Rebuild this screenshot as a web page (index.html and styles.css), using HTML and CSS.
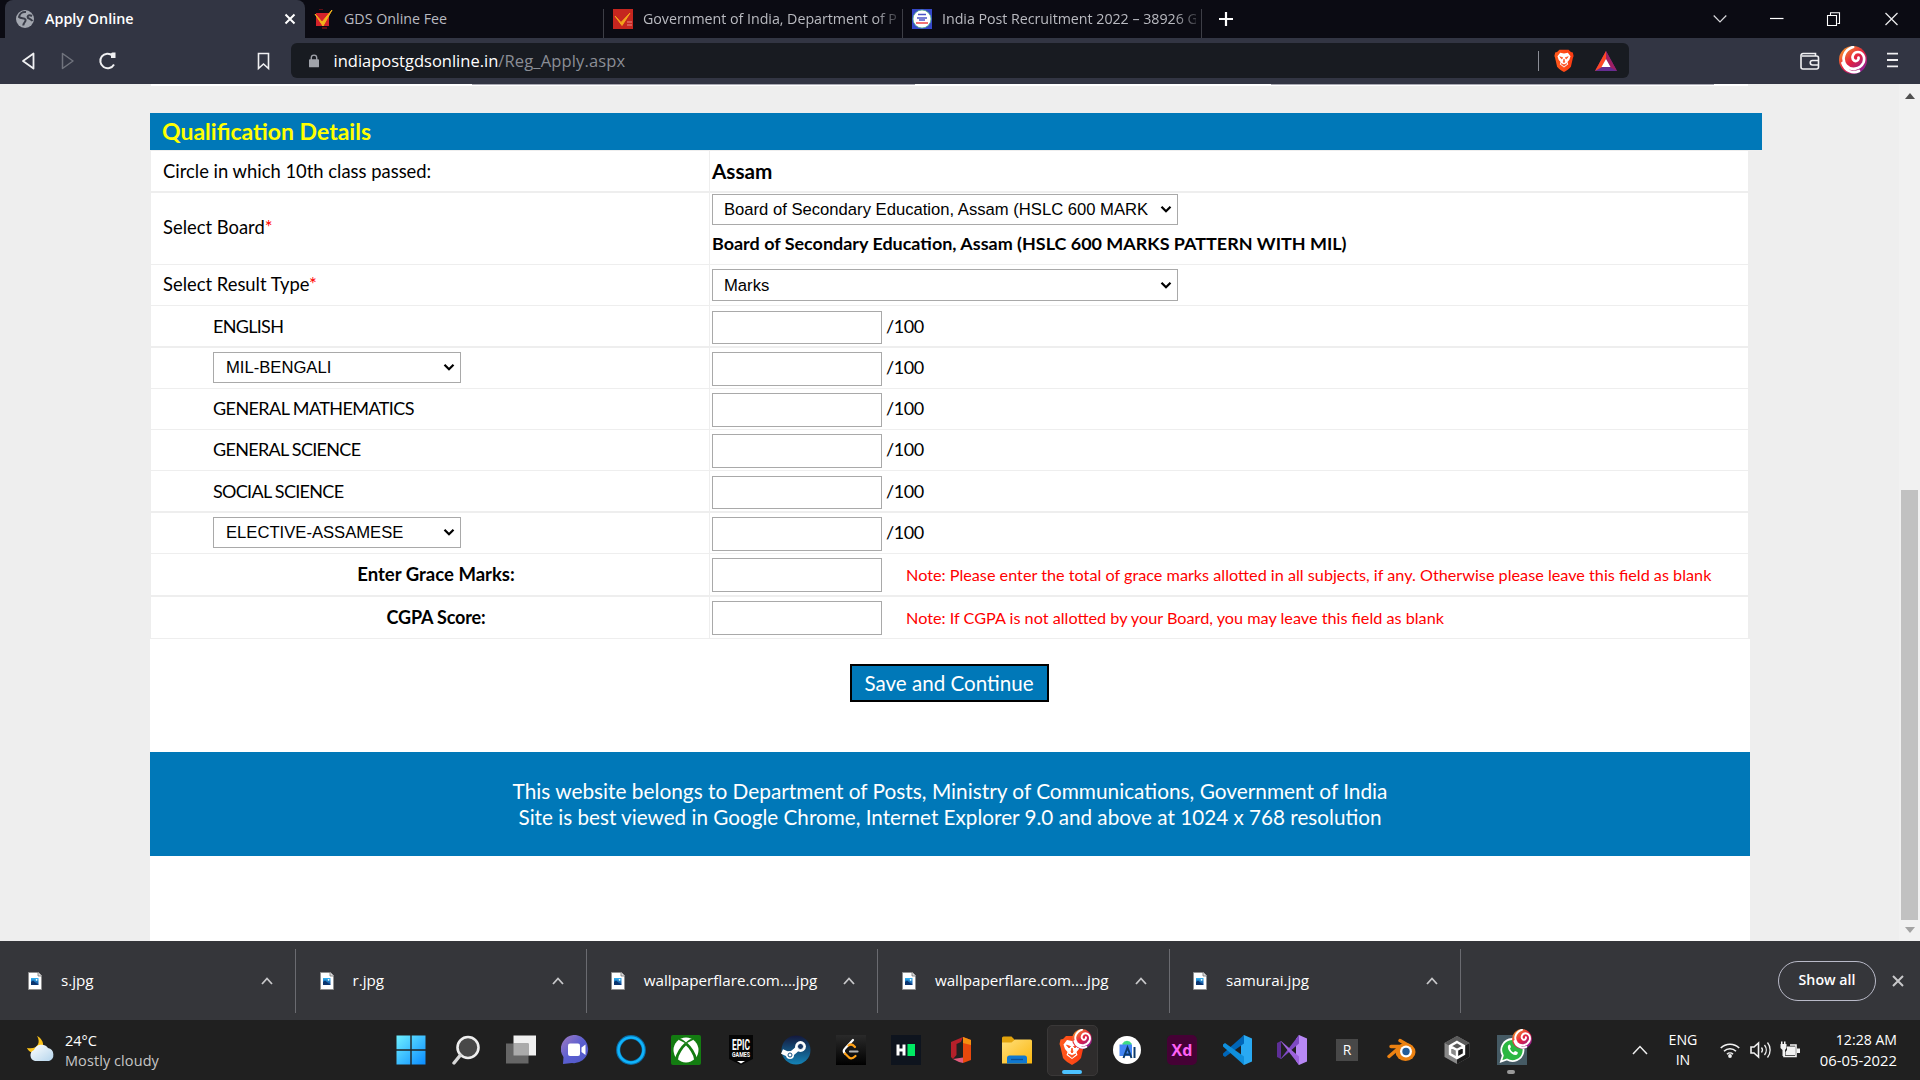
FILE: index.html
```html
<!DOCTYPE html>
<html lang="en">
<head>
<meta charset="utf-8">
<title>Apply Online</title>
<link rel="stylesheet" href="styles.css">
</head>
<body>
<svg class="defs" width="0" height="0" aria-hidden="true">
  <defs>
    <linearGradient id="gSwirl" gradientUnits="userSpaceOnUse" x1="4" y1="2" x2="24" y2="26"><stop offset="0" stop-color="#f7942c"/><stop offset=".5" stop-color="#e3203f"/><stop offset="1" stop-color="#8a1f9c"/></linearGradient>
    <linearGradient id="gWin" x1="0" y1="0" x2="1" y2="1"><stop offset="0" stop-color="#6ff0ff"/><stop offset="1" stop-color="#0a8cff"/></linearGradient>
    <linearGradient id="gChat" x1="0" y1="0" x2="1" y2="1"><stop offset="0" stop-color="#a37bc0"/><stop offset=".5" stop-color="#5b5fd0"/><stop offset="1" stop-color="#5058c8"/></linearGradient>
    <linearGradient id="gSteam" x1="0" y1="0" x2="0" y2="1"><stop offset="0" stop-color="#14183c"/><stop offset="1" stop-color="#1484b8"/></linearGradient>
    <linearGradient id="gFold" x1="0" y1="0" x2="1" y2="1"><stop offset="0" stop-color="#ffdf7a"/><stop offset="1" stop-color="#fbb70f"/></linearGradient>
    <linearGradient id="gBrave" x1="0" y1="0" x2="1" y2="0"><stop offset="0" stop-color="#ff5a1c"/><stop offset="1" stop-color="#fb3a12"/></linearGradient>
    <linearGradient id="gDoc" x1="0" y1="0" x2="0" y2="1"><stop offset="0" stop-color="#35b3f2"/><stop offset="1" stop-color="#0d3f8c"/></linearGradient>
    <linearGradient id="gLeet" x1="0" y1="0" x2="0" y2="1"><stop offset="0" stop-color="#2a2a2a"/><stop offset="1" stop-color="#000"/></linearGradient>
    <linearGradient id="gCloud" x1="0" y1="0" x2="1" y2="1"><stop offset="0" stop-color="#fff"/><stop offset="1" stop-color="#b4d4ec"/></linearGradient>
    <symbol id="swirl" viewBox="0 0 28 28"><circle cx="14" cy="14" r="14" fill="url(#gSwirl)"/><path d="M14 1C5 4 2 13 7 19.500C12 25 21 23.500 24.500 16.500C26.500 11 23.500 6 19 6C14 6 12 12 15 14.500C17.500 16 20 14 19.500 11.500M3.500 17C6 25 14 28 20 25" fill="none" stroke="#fff" stroke-width="2.700" stroke-linecap="round"/></symbol>
    <symbol id="lion" viewBox="0 0 26 30"><path d="M7 1H19L22 4L24.500 4.500L25.500 9L24.500 12L22 23C20 26 16 28 13 30C10 28 6 26 4 23L1.500 12L.5 9L1.500 4.500L4 4Z" fill="url(#gBrave)"/><path d="M8 5L13 6L18 5L21.500 9.500L20 14L17.500 17L18.500 20L13 24L7.500 20L8.500 17L6 14L4.500 9.500Z" fill="#fff"/><path d="M7.500 10L11.500 11.500L10 13ZM18.500 10L14.500 11.500L16 13ZM13 13L14 17L13 18L12 17ZM9 19L13 20.500L17 19L13 22.500Z" fill="#fb4a18" stroke="#fb4a18" stroke-width=".8"/></symbol>
    <symbol id="chev" viewBox="0 0 12 9"><path d="M1.500 1.700L6 6.300L10.500 1.700" fill="none" stroke="#000" stroke-width="2.200"/></symbol>
    <symbol id="doc" viewBox="0 0 14 18"><path d="M.5.500H10L13.500 4V17.500H.5Z" fill="#fff" stroke="#8f8f8f"/><path d="M10 0V4H14" fill="#ddd" stroke="#777" stroke-width=".8"/><rect x="3" y="6" width="7.500" height="7" fill="url(#gDoc)"/><path d="M3 10L5 8.500L10.500 13H3Z" fill="#0c356f"/><circle cx="8.600" cy="7.800" r=".9" fill="#fff"/></symbol>
    <symbol id="up" viewBox="0 0 12 8"><path d="M1 7L6 1.500L11 7" fill="none" stroke="#c8c8ca" stroke-width="1.800"/></symbol>
  </defs>
</svg>

<header class="tabs">
  <div class="tab tab-active">
    <svg class="fav" viewBox="0 0 18 18"><circle cx="9" cy="9" r="9" fill="#a3a7b0"/><path d="M10 2C6 1.500 3.500 4 3 7C5 9 8 7.500 9.500 9.500C10.500 12 7 12 7.500 15.500M16 6C12 4 11 6.500 12 8C14 9 15 9 16.500 11" fill="none" stroke="#3a3d49" stroke-width="2"/></svg>
    <span class="tab-title">Apply Online</span>
    <svg class="tab-x" viewBox="0 0 12 12"><path d="M1.500 1.500L10.500 10.500M10.500 1.500L1.500 10.500" stroke="#fff" stroke-width="2"/></svg>
  </div>
  <div class="tab tab-bg">
    <svg class="fav" viewBox="0 0 20 20"><path d="M2 4H15V17H2Z" fill="#d3222a"/><path d="M5 0H9M8 19H13" stroke="#7c1218" stroke-width="1.500"/><path d="M1 5L8 13L18 1L9 17Z" fill="#f4b41c" stroke="#f4b41c" stroke-linejoin="round"/></svg>
    <span class="tab-title">GDS Online Fee</span>
  </div>
  <div class="tab tab-bg">
    <svg class="fav" viewBox="0 0 20 20"><path d="M0 0H20V20H0Z" fill="#c5261f"/><path d="M2 7L8 13.500L17 4L9 16.500Z" fill="#f4a41c" stroke="#f4a41c"/><path d="M14 13H19M14 16H19" stroke="#e88"/></svg>
    <span class="tab-title fade">Government of India, Department of P</span>
  </div>
  <div class="tab tab-bg">
    <svg class="fav" viewBox="0 0 20 20"><path d="M0 0H20V20H0Z" fill="#3548c8"/><circle cx="10" cy="10" r="9" fill="#fff" stroke="#58b48a" stroke-width=".8"/><path d="M6 5.500H14M5 9H15M7 11H13" stroke="#4c55c8" stroke-width="1.500"/><path d="M4 14H16" stroke="#e44" stroke-width="1.500"/></svg>
    <span class="tab-title fade">India Post Recruitment 2022 – 38926 G</span>
  </div>
  <svg class="plus" viewBox="0 0 16 16"><path d="M8 1V15M1 8H15" stroke="#fff" stroke-width="2.200"/></svg>
  <svg class="winctl" viewBox="0 0 186 14"><path d="M.7 3.500L7 10L13.300 3.500" fill="none" stroke="#d8d8dc" stroke-width="1.200"/><path d="M57 6.500H70.500" stroke="#fff" stroke-width="1.200"/><path d="M114.500 3.500H123.500V13.500H114.500ZM117.500 3V.7H126.500V11.500H124.500" fill="none" stroke="#fff" stroke-width="1.100"/><path d="M172.500 1L184.500 13M184.500 1L172.500 13" stroke="#e8e8ea" stroke-width="1.300"/></svg>
</header>

<nav class="toolbar">
  <svg class="navic" viewBox="0 0 260 20"><path d="M12.500 2.500V17.500L2 10Z" fill="none" stroke="#f0f0f2" stroke-width="1.800" stroke-linejoin="round"/><path d="M41.500 2.500V17.500L52 10Z" fill="none" stroke="#70737d" stroke-width="1.500" stroke-linejoin="round"/><path d="M93 13.500A7.300 7.300 0 1 1 91.500 4.500" fill="none" stroke="#f0f0f2" stroke-width="2"/><path d="M90 2.500A2 2 0 0 1 92 1.500H94.500V7H90Z" fill="#f0f0f2"/><path d="M237.500 2.500H247.500V17.500L242.500 13L237.500 17.500Z" fill="none" stroke="#f0f0f2" stroke-width="1.600"/></svg>
  <div class="url">
    <svg class="lock" viewBox="0 0 11 14"><rect x="0" y="5" width="11" height="9" rx="1" fill="#a0a3aa"/><path d="M2.500 6V3.500A3 3 0 0 1 8.500 3.500V6" fill="none" stroke="#a0a3aa" stroke-width="1.500"/></svg>
    <span class="host">indiapostgdsonline.in</span><span class="path">/Reg_Apply.aspx</span>
    <span class="url-sep"></span>
    <svg class="shield" viewBox="0 0 26 30"><use href="#lion"/></svg>
    <svg class="bat" viewBox="0 0 22 20"><path d="M11 0L22 20H0Z" fill="#662d91"/><path d="M11 0L0 20L7 16L11 8Z" fill="#ff4724"/><path d="M11 0L22 20L15 16L11 8Z" fill="#9e1f63"/><path d="M11 8L15.500 16H6.500Z" fill="#fff"/></svg>
  </div>
  <svg class="wallet" viewBox="0 0 20 18"><path d="M1 3.500V15A2 2 0 0 0 3 17H16.500A2 2 0 0 0 18.500 15V6A2 2 0 0 0 16.500 4H2M1 3.500A2 2 0 0 1 3 1.500H15.500V4" fill="none" stroke="#f0f0f2" stroke-width="1.600"/><path d="M18.500 8.500H12.500A2.200 2.200 0 0 0 12.500 13H18.500" fill="none" stroke="#f0f0f2" stroke-width="1.600"/></svg>
  <svg class="avatar" viewBox="0 0 28 28"><use href="#swirl"/></svg>
  <svg class="burger" viewBox="0 0 12 16"><path d="M0 1H12M0 8H12M0 15H12" stroke="#f0f0f2" stroke-width="2"/></svg>
</nav>

<main class="page">
  <div class="sheet">
    <div class="prev"><i></i><i></i></div>
    <h1 class="banner">Qualification Details</h1>
    <div class="form">
      <div class="row thick"><div class="cell-l">Circle in which 10th class passed:</div><div class="cell-r big"><b>Assam</b></div></div>
      <div class="row board"><div class="cell-l">Select Board<em>*</em></div>
        <div class="cell-r stack"><div class="sel sel-wide sel-board"><span>Board of Secondary Education, Assam (HSLC 600 MARK</span><svg class="chev"><use href="#chev"/></svg></div><b class="boardname">Board of Secondary Education, Assam (HSLC 600 MARKS PATTERN WITH MIL)</b></div></div>
      <div class="row result"><div class="cell-l">Select Result Type<em>*</em></div><div class="cell-r"><div class="sel sel-wide sel-type"><span>Marks</span><svg class="chev"><use href="#chev"/></svg></div></div></div>
      <div class="row thick"><div class="cell-l sub">ENGLISH</div><div class="cell-r"><input class="low"><span class="of">/100</span></div></div>
      <div class="row"><div class="cell-l sub"><div class="sel sel-sub"><span>MIL-BENGALI</span><svg class="chev"><use href="#chev"/></svg></div></div><div class="cell-r"><input><span class="of">/100</span></div></div>
      <div class="row"><div class="cell-l sub wide">GENERAL MATHEMATICS</div><div class="cell-r"><input><span class="of">/100</span></div></div>
      <div class="row"><div class="cell-l sub">GENERAL SCIENCE</div><div class="cell-r"><input><span class="of">/100</span></div></div>
      <div class="row thick"><div class="cell-l sub">SOCIAL SCIENCE</div><div class="cell-r"><input class="low"><span class="of">/100</span></div></div>
      <div class="row"><div class="cell-l sub"><div class="sel sel-sub"><span>ELECTIVE-ASSAMESE</span><svg class="chev"><use href="#chev"/></svg></div></div><div class="cell-r"><input><span class="of">/100</span></div></div>
      <div class="row thick last"><div class="cell-l mid"><b class="grace">Enter Grace Marks:</b></div><div class="cell-r"><input><span class="note">Note: Please enter the total of grace marks allotted in all subjects, if any. Otherwise please leave this field as blank</span></div></div>
      <div class="row last"><div class="cell-l mid"><b class="cgpa">CGPA Score:</b></div><div class="cell-r"><input><span class="note">Note: If CGPA is not allotted by your Board, you may leave this field as blank</span></div></div>
    </div>
    <div class="actions"><button class="save">Save and Continue</button></div>
    <footer class="foot"><p>This website belongs to Department of Posts, Ministry of Communications, Government of India</p><p class="small">Site is best viewed in Google Chrome, Internet Explorer 9.0 and above at 1024 x 768 resolution</p></footer>
  </div>
  <div class="scroll"><svg class="s-up" viewBox="0 0 10 6"><path d="M0 6L5 0L10 6Z" fill="#505050"/></svg><i class="thumb"></i><svg class="s-down" viewBox="0 0 10 6"><path d="M0 0L5 6L10 0Z" fill="#a3a3a3"/></svg></div>
</main>

<section class="downloads">
  <div class="dl first"><svg class="doc"><use href="#doc"/></svg><span>s.jpg</span><svg class="up"><use href="#up"/></svg></div>
  <div class="dl"><svg class="doc"><use href="#doc"/></svg><span>r.jpg</span><svg class="up"><use href="#up"/></svg></div>
  <div class="dl"><svg class="doc"><use href="#doc"/></svg><span>wallpaperflare.com....jpg</span><svg class="up"><use href="#up"/></svg></div>
  <div class="dl"><svg class="doc"><use href="#doc"/></svg><span>wallpaperflare.com....jpg</span><svg class="up"><use href="#up"/></svg></div>
  <div class="dl"><svg class="doc"><use href="#doc"/></svg><span>samurai.jpg</span><svg class="up"><use href="#up"/></svg></div>
  <div class="showall">Show all</div>
  <svg class="dl-x" viewBox="0 0 12 12"><path d="M1 1L11 11M11 1L1 11" stroke="#c8c8ca" stroke-width="2"/></svg>
</section>

<section class="taskbar">
  <svg class="moon" viewBox="0 0 28 26"><path d="M10 0C14 6 11 14 0 12C2 18 14 20 16 11C17 6 14 2 10 0Z" fill="#fbc21a"/><path d="M8 25A5.800 5.800 0 0 1 7 14A8 8 0 0 1 21 12A6.800 6.800 0 0 1 22 25Z" fill="url(#gCloud)"/></svg>
  <div class="weather"><span>24°C</span><span class="dim">Mostly cloudy</span></div>
  <div class="apps">
    <span class="app"><svg viewBox="0 0 30 30"><path d="M.5.500H14.300V14.300H.5ZM15.700.500H29.500V14.300H15.700ZM.5 15.700H14.300V29.500H.5ZM15.700 15.700H29.500V29.500H15.700Z" fill="url(#gWin)"/></svg></span>
    <span class="app"><svg viewBox="0 0 30 30"><circle cx="17" cy="12.500" r="10.500" fill="#484848" stroke="#eee" stroke-width="2.600"/><path d="M9.500 20L3 28" stroke="#d8d8d8" stroke-width="3.400" stroke-linecap="round"/></svg></span>
    <span class="app"><svg viewBox="0 0 30 30"><path d="M7.500.500H30V20.500H7.500Z" fill="#f0f0f0"/><path d="M0 8.500H22.500V28.500H0Z" fill="#666"/><path d="M7.500 8.500H22.500V20.500H7.500Z" fill="#ababab"/></svg></span>
    <span class="app"><svg viewBox="0 0 30 30"><path d="M15 0A14 14 0 1 1 11 28L2 29L2.500 22A14 14 0 0 1 15 0Z" fill="url(#gChat)"/><rect x="7" y="8.500" width="12" height="12.500" rx="2" fill="#fff"/><path d="M20.500 12.500L24.500 9.500V20L20.500 17Z" fill="#fff"/></svg></span>
    <span class="app"><svg viewBox="0 0 30 30"><circle cx="15" cy="15" r="12.800" fill="none" stroke="#0a6ea8" stroke-width="4.200"/><circle cx="15" cy="15" r="12.500" fill="none" stroke="#10b4fc" stroke-width="2.600"/></svg></span>
    <span class="app"><svg viewBox="0 0 30 30"><rect width="30" height="30" rx="2" fill="#137c11"/><circle cx="15" cy="15" r="12.500" fill="#fff"/><path d="M15 8.500C19 12 24 19 24.500 24.500M15 8.500C11 12 6 19 5.500 24.500" fill="none" stroke="#137c11" stroke-width="2.800"/><path d="M7 4.500C11 3 13 6 15 7.500C17 6 19 3 23 4.500L15 8.500Z" fill="#137c11"/></svg></span>
    <span class="app"><svg viewBox="0 0 30 30"><path d="M3 0H27V24L15 30L3 24Z" fill="#060606"/><path d="M11 26H19L15 28.500Z" fill="#fff"/><text x="15" y="14.500" class="epic-a" textLength="18" lengthAdjust="spacingAndGlyphs">EPIC</text><text x="15" y="22" class="epic-b" textLength="18" lengthAdjust="spacingAndGlyphs">GAMES</text></svg></span>
    <span class="app"><svg viewBox="0 0 30 30"><circle cx="15" cy="15" r="14.500" fill="url(#gSteam)"/><path d="M1 16.500L9 20L14 16L19 11" fill="none" stroke="#fff" stroke-width="5"/><circle cx="19.500" cy="11.500" r="5.400" fill="#fff"/><circle cx="19.500" cy="11.500" r="3.100" fill="#1a3a66" stroke="#fff"/><circle cx="9" cy="20" r="4" fill="#fff"/><circle cx="9" cy="20" r="2" fill="none" stroke="#155080"/></svg></span>
    <span class="app"><svg viewBox="0 0 30 30"><path d="M0 0H30V30H0Z" fill="url(#gLeet)"/><path d="M17 5L9 13.500C7.500 15 7.500 17 9 18.500" fill="none" stroke="#fff" stroke-width="2.200" stroke-linecap="round"/><path d="M12.500 10.500C15 8.500 17 9.500 19 12M9 18.500L13 22.500C15 24 17 23.500 19.500 21" fill="none" stroke="#ffa116" stroke-width="2.200" stroke-linecap="round"/><path d="M14 16.500H21.500" stroke="#b3b3b3" stroke-width="2.200" stroke-linecap="round"/></svg></span>
    <span class="app"><svg viewBox="0 0 30 30"><path d="M0 0H30V30H0Z" fill="#0e141e"/><path d="M7 9.500V20.500M13 9.500V20.500M7 15H13" stroke="#fff" stroke-width="3"/><path d="M16.500 9H24V21H16.500Z" fill="#00ea64"/></svg></span>
    <span class="app"><svg viewBox="0 0 30 30"><path d="M5 7L17 2L15 7L10.500 9V20L7 24L5 22Z" fill="#b5202a"/><path d="M17 2L25 5V25L17 28Z" fill="#e8480c"/><path d="M17 2L25 5V10L17 8Z" fill="#f59010"/><path d="M7 24L17 22.500V28L13 27Z" fill="#e25a7c"/></svg></span>
    <span class="app"><svg viewBox="0 0 30 30"><path d="M0 3A1.500 1.500 0 0 1 1.500 1.500H9.500L13 5V9H0Z" fill="#e2a30c"/><path d="M0 7.500H9.500L13 4.500H28.500A1.500 1.500 0 0 1 30 6V28.500H0Z" fill="url(#gFold)"/><path d="M5 28.500V23A2.500 2.500 0 0 1 7.500 20.500H22.500A2.500 2.500 0 0 1 25 23V28.500Z" fill="#0f78d0"/><path d="M9 24.500H21" stroke="#0a4f96" stroke-width="1.300"/></svg></span>
    <span class="app app-on"><svg viewBox="0 0 26 30"><use href="#lion"/></svg><svg class="badge" viewBox="0 0 28 28"><use href="#swirl"/></svg><i class="ind ind-on"></i></span>
    <span class="app"><svg viewBox="0 0 30 30"><circle cx="15" cy="15" r="14" fill="#fff"/><path d="M10.500 8.500A5 5 0 0 1 19.500 8.500V10H10.500Z" fill="#3ddc84"/><path d="M7.500 9.500H20V21H7.500Z" fill="#4285f4"/><path d="M11.500 23L15.500 12.500L19.500 23M13 19.500H18M22.500 12V23" fill="none" stroke="#0b3b6e" stroke-width="2"/></svg></span>
    <span class="app"><svg viewBox="0 0 30 30"><rect width="30" height="30" rx="5" fill="#450135"/><text x="15" y="21" class="xd">Xd</text></svg></span>
    <span class="app"><svg viewBox="0 0 30 30"><path d="M22 0L30 3.500V26.500L22 30L19 26V4Z" fill="#29a9f2"/><path d="M22 0L1 18.500V20.500L3 22L22 8.500Z" fill="#0066b8"/><path d="M22 30L1 11.500V9.500L3 8L22 21.500Z" fill="#0f8fdc"/></svg></span>
    <span class="app"><svg viewBox="0 0 30 30"><path d="M22 0L30 3.500V26.500L22 30L19 26V4Z" fill="#b888f5"/><path d="M0 8L4 6V24L0 22Z" fill="#5d2e96"/><path d="M3.500 24L22 0V8.500L4 24Z" fill="#7e49c4"/><path d="M3.500 6L22 30V21.500L4 6Z" fill="#9d62dc"/></svg></span>
    <span class="app"><svg viewBox="0 0 30 30"><path d="M4 4H26V26H4Z" fill="#484848"/><text x="15" y="20" class="r">R</text></svg></span>
    <span class="app"><svg viewBox="0 0 30 30"><path d="M13 5.500L24 12M4 11.500H15M2 21.500L13 12" fill="none" stroke="#ec8212" stroke-width="3.400" stroke-linecap="round"/><ellipse cx="18.500" cy="17" rx="10" ry="9" fill="#ec8212"/><circle cx="19" cy="16.500" r="6" fill="#fff"/><circle cx="19" cy="16.500" r="3.700" fill="#245c98"/></svg></span>
    <span class="app"><svg viewBox="0 0 30 30"><path d="M15 1L27.500 8V22L15 29L2.500 22V8Z" fill="#888"/><path d="M27.500 8V22L15 29V15Z" fill="#1c1c1c"/><path d="M2.500 8L15 1L27.500 8L15 15Z" fill="#5a5a5a"/><path d="M15 7L22 11V19L15 23L8 19V11ZM15 15V23M15 15L8 11M15 15L22 11" fill="none" stroke="#fff" stroke-width="2.400"/></svg></span>
    <span class="app"><svg viewBox="0 0 30 30"><path d="M0 0H30V30H0Z" fill="#455a64"/><path d="M15 4A11 11 0 1 1 10 24.500L4 26.500L5.800 20.500A11 11 0 0 1 15 4Z" fill="#2cb742" stroke="#fff" stroke-width="1.800"/><path d="M11.500 10C9 13 14 20.500 19 20C21 19.500 21 17.500 20.500 17L18 16L16.500 17.500C14.500 16.500 13.500 15 13 13.500L14 12L13 9.500Z" fill="#fff"/></svg><svg class="badge" viewBox="0 0 28 28"><use href="#swirl"/></svg><i class="ind"></i></span>
  </div>
  <svg class="tray-up" viewBox="0 0 16 10"><path d="M1 9L8 1.500L15 9" fill="none" stroke="#eee" stroke-width="1.500"/></svg>
  <div class="lang"><span>ENG</span><span>IN</span></div>
  <svg class="sys" viewBox="0 0 80 20"><g fill="none" stroke="#f2f2f2" stroke-width="1.600"><path d="M.8 8A13 13 0 0 1 19.200 8M4 11.200A8.500 8.500 0 0 1 16 11.200M7 14.200A4.300 4.300 0 0 1 13 14.200"/><path d="M31 7H34L38.500 3V17L34 13H31Z"/><path d="M41.500 7.500A4 4 0 0 1 41.500 12.500M44.500 5A8 8 0 0 1 44.500 15M47.500 2.500A12 12 0 0 1 47.500 17.500" stroke-width="1.300"/><path d="M70 5H76V16.500H64V13"/></g><circle cx="10" cy="16" r="1.900" fill="#f2f2f2"/><path d="M67 6.500H75V15H65.500V12L67 10ZM77 8.500H80V13H77ZM61 1.500H62.500V4H64V1.500H65.500V4H66.500V8L65 10V16H62.500V10L60.500 8V4H61Z" fill="#f2f2f2"/></svg>
  <div class="clock"><span class="time">12:28 AM</span><span class="date">06-05-2022</span></div>
</section>
</body>
</html>
```
FILE: styles.css
```css
* { box-sizing: border-box; }
body { margin: 0; width: 1920px; height: 1080px; overflow: hidden; display: flex; flex-direction: column; background: #eee; color: #000; font-family: "Open Sans", "Noto Sans", sans-serif; }
svg { display: block; flex: none; }
.defs { position: absolute; }
span, b { white-space: nowrap; }

.tabs { height: 38px; flex: none; display: flex; align-items: center; background: #0b0b13; padding-left: 5px; color: #b9bac0; font-size: 14.250px; }
.tab { height: 38px; display: flex; align-items: center; padding-left: 11px; }
.tab-title { padding-bottom: 2px; }
.tab-active { width: 300px; background: #323543; border-radius: 8px 8px 0 0; color: #fff; font-weight: 600; font-size: 14.350px; }
.fav { width: 18px; height: 18px; margin-right: 11px; }
.tab-x { width: 12px; height: 12px; margin-left: auto; margin-right: 9px; }
.tab-bg { width: 299px; padding-left: 9px; background: linear-gradient(#3d3e46, #3d3e46) right bottom / 1px 29px no-repeat; }
.tab-bg .fav { width: 20px; height: 20px; margin-right: 10px; }
.fade { width: 254px; overflow: hidden; letter-spacing: -.03px; -webkit-mask-image: linear-gradient(90deg, #000 232px, transparent 262px); mask-image: linear-gradient(90deg, #000 232px, transparent 262px); }
.plus { width: 16px; height: 16px; margin-left: 16px; }
.winctl { width: 186px; height: 14px; margin: 0 21px 0 auto; }

.toolbar { height: 46px; flex: none; display: flex; align-items: center; background: #323543; }
.navic { width: 260px; height: 20px; margin: -1px 0 0 21px; }
.url { width: 1338px; height: 35px; margin: -1px 0 0 10px; display: flex; align-items: center; background: #181b21; border-radius: 6px; padding: 0 12px 0 18px; font-size: 16.500px; }
.lock { width: 10px; height: 14px; margin-right: 14.500px; }
.host { color: #fff; }
.path { color: #8b8e96; letter-spacing: .14px; }
.url-sep { width: 1px; height: 20px; background: #8b8e96; margin-left: auto; }
.shield { width: 20px; height: 23px; margin-left: 15px; }
.bat { width: 22px; height: 20px; margin-left: 21px; }
.wallet { width: 20px; height: 18px; margin-left: auto; }
.avatar { width: 28px; height: 28px; margin: -3px 0 0 19px; }
.burger { width: 11px; height: 16px; margin: -2px 22px 0 20px; }

.page { height: 857px; flex: none; display: flex; justify-content: space-between; background: #eee; padding-left: 150px; font-family: Lato, "Open Sans", sans-serif; }
.sheet { width: 1600px; display: flex; flex-direction: column; }
.prev { height: 2px; flex: none; display: flex; gap: 356px; padding-left: 321px; margin: 0 2px 27px 1px; background: #fff; }
.prev i { width: 443px; height: 1px; background: #a9a9b2; }
.banner { width: 1612px; height: 37px; flex: none; margin: 0; padding-left: 12px; background: #0078b8; color: #ff0; font-size: 23px; line-height: 37px; font-weight: 700; }
.form { flex: none; width: 1598px; margin: 1px 2px 0 0; border-left: 1px solid #eee; font-size: 18.400px; }
.row { display: flex; height: 41px; border-bottom: 1px solid #eee; background: #fff; }
.thick { height: 42px; border-bottom-width: 2px; }
.board { height: 72px; }
.last { height: 42px; }
.thick.last { height: 43px; }
.cell-l { width: 559px; padding-left: 12px; border-right: 1px solid #eee; line-height: 40px; }
.board .cell-l { line-height: 69px; }
.result .cell-l { line-height: 39px; }
.sub { padding-left: 62px; font-size: 18px; letter-spacing: -.7px; line-height: 39px; }
.wide { letter-spacing: -.58px; }
.thick .sub { line-height: 40px; }
.mid { text-align: center; }
.cell-l em { color: #f00; font-style: normal; }
.grace { font-size: 18.550px; }
.cgpa { font-size: 18px; letter-spacing: -.15px; }
.cell-r { flex: 1; display: flex; align-items: flex-start; padding-left: 2px; line-height: 40px; }
.cell-r.big { font-size: 20.700px; }
.cell-r.stack { flex-direction: column; }
.cell-r input { width: 170px; height: 34px; margin: 4px 0 0; border: 1px solid #a9a9a9; background: #fff; padding: 0; }
.cell-r input.low { height: 33px; margin-top: 5px; }
.of { margin-left: 4px; font-size: 18px; letter-spacing: -.45px; line-height: 39px; }
.thick .of { line-height: 40px; }
.note { margin-left: 24px; color: #f00; font-size: 16.230px; line-height: 41px; }
.sel { display: flex; align-items: center; justify-content: space-between; border: 1px solid #a9a9a9; background: #fff; padding: 0 5px 0 11px; font: 16.640px/29px "Liberation Sans", Arial, sans-serif; letter-spacing: 0; }
.sel-wide { width: 466px; height: 32px; }
.sel-board { height: 31px; margin-top: 1px; }
.sel-type { margin-top: 4px; }
.sel-sub { width: 248px; height: 31px; margin-top: 4px; padding-left: 12px; }
.chev { width: 12px; height: 9px; }
.boardname { line-height: 36px; font-size: 17.970px; }
.actions { flex: none; width: 1598px; height: 113px; padding-top: 25px; display: flex; justify-content: center; align-items: flex-start; background: #fff; box-shadow: 2px 0 #fff; }
.save { width: 199px; height: 38px; padding: 0; border: 2px solid #000; background: #0078b8; color: #fff; font: 20.580px/34px Lato, sans-serif; }
.foot { flex: none; height: 104px; background: #0078b8; color: #fff; text-align: center; padding-top: 24.500px; font-size: 20.840px; line-height: 27px; }
.foot p { margin: 0; }
.foot .small { font-size: 20.690px; }
.sheet::after { content: ""; flex: 1; background: #fff; }
.scroll { width: 21px; background: #f1f1f1; display: flex; flex-direction: column; align-items: center; padding-top: 9px; }
.s-up, .s-down { width: 10px; height: 6px; }
.thumb { width: 17px; height: 430px; margin: 391px 0 7px; background: #c1c1c1; }

.downloads { height: 79px; flex: none; display: flex; align-items: center; background: #35363a; color: #fff; font-size: 15.200px; }
.dl { width: 291.200px; height: 64px; display: flex; align-items: center; padding: 0 22px 0 23.500px; border-right: 1px solid #6a6b70; }
.dl span { padding-bottom: 2px; }
.dl.first { width: 296px; padding-left: 28px; }
.doc { width: 14px; height: 18px; margin-right: 19px; }
.up { width: 12px; height: 8px; margin-left: auto; }
.showall { width: 98px; height: 40px; margin-left: auto; border: 1px solid #b9bac8; border-radius: 20px; font-weight: 600; font-size: 14.200px; line-height: 36px; text-align: center; }
.dl-x { width: 12px; height: 12px; margin: 0 16px; }

.taskbar { height: 60px; flex: none; display: flex; align-items: center; background: #202020; color: #fff; font-size: 14.500px; }
.moon { width: 28px; height: 26px; margin: 0 10px 2px 27px; }
.weather, .lang, .clock { display: flex; flex-direction: column; line-height: 20px; }
.weather { width: 318.500px; padding-top: 1px; }
.dim { color: #c6c6c6; letter-spacing: .08px; }
.apps { display: flex; height: 60px; }
.app { position: relative; width: 55.050px; display: flex; align-items: center; justify-content: center; }
.app > svg { width: 30px; height: 30px; }
.app-on::before { content: ""; position: absolute; left: 3px; top: 5px; width: 49px; height: 49px; background: #2e2c2c; border: 1px solid #3a3838; border-radius: 5px; }
.app-on > svg { position: relative; }
.app > .badge { position: absolute; left: 28px; top: 9px; width: 20px; height: 20px; }
.ind { position: absolute; left: 23px; top: 50px; width: 8px; height: 4px; border-radius: 2px; background: #999; }
.ind-on { left: 17.500px; width: 20px; background: #4cc2ff; }
.epic-a { font: 700 14px "Roboto", sans-serif; fill: #fff; text-anchor: middle; }
.epic-b { font: 700 6.500px "Roboto", sans-serif; fill: #fff; text-anchor: middle; }
.xd { font: 700 16px "Open Sans", sans-serif; fill: #ff61f6; text-anchor: middle; }
.r { font: 14px "Open Sans", sans-serif; fill: #fff; text-anchor: middle; }
.tray-up { width: 16px; height: 10px; margin-left: 93px; }
.lang { width: 29px; align-items: center; margin-left: 20px; font-size: 14.200px; }
.sys { width: 80px; height: 20px; margin: -1px 0 0 23px; }
.clock { align-items: flex-end; margin: 0 23px 0 auto; }
.time { font-size: 14.100px; }
.date { font-size: 14.800px; }
```
